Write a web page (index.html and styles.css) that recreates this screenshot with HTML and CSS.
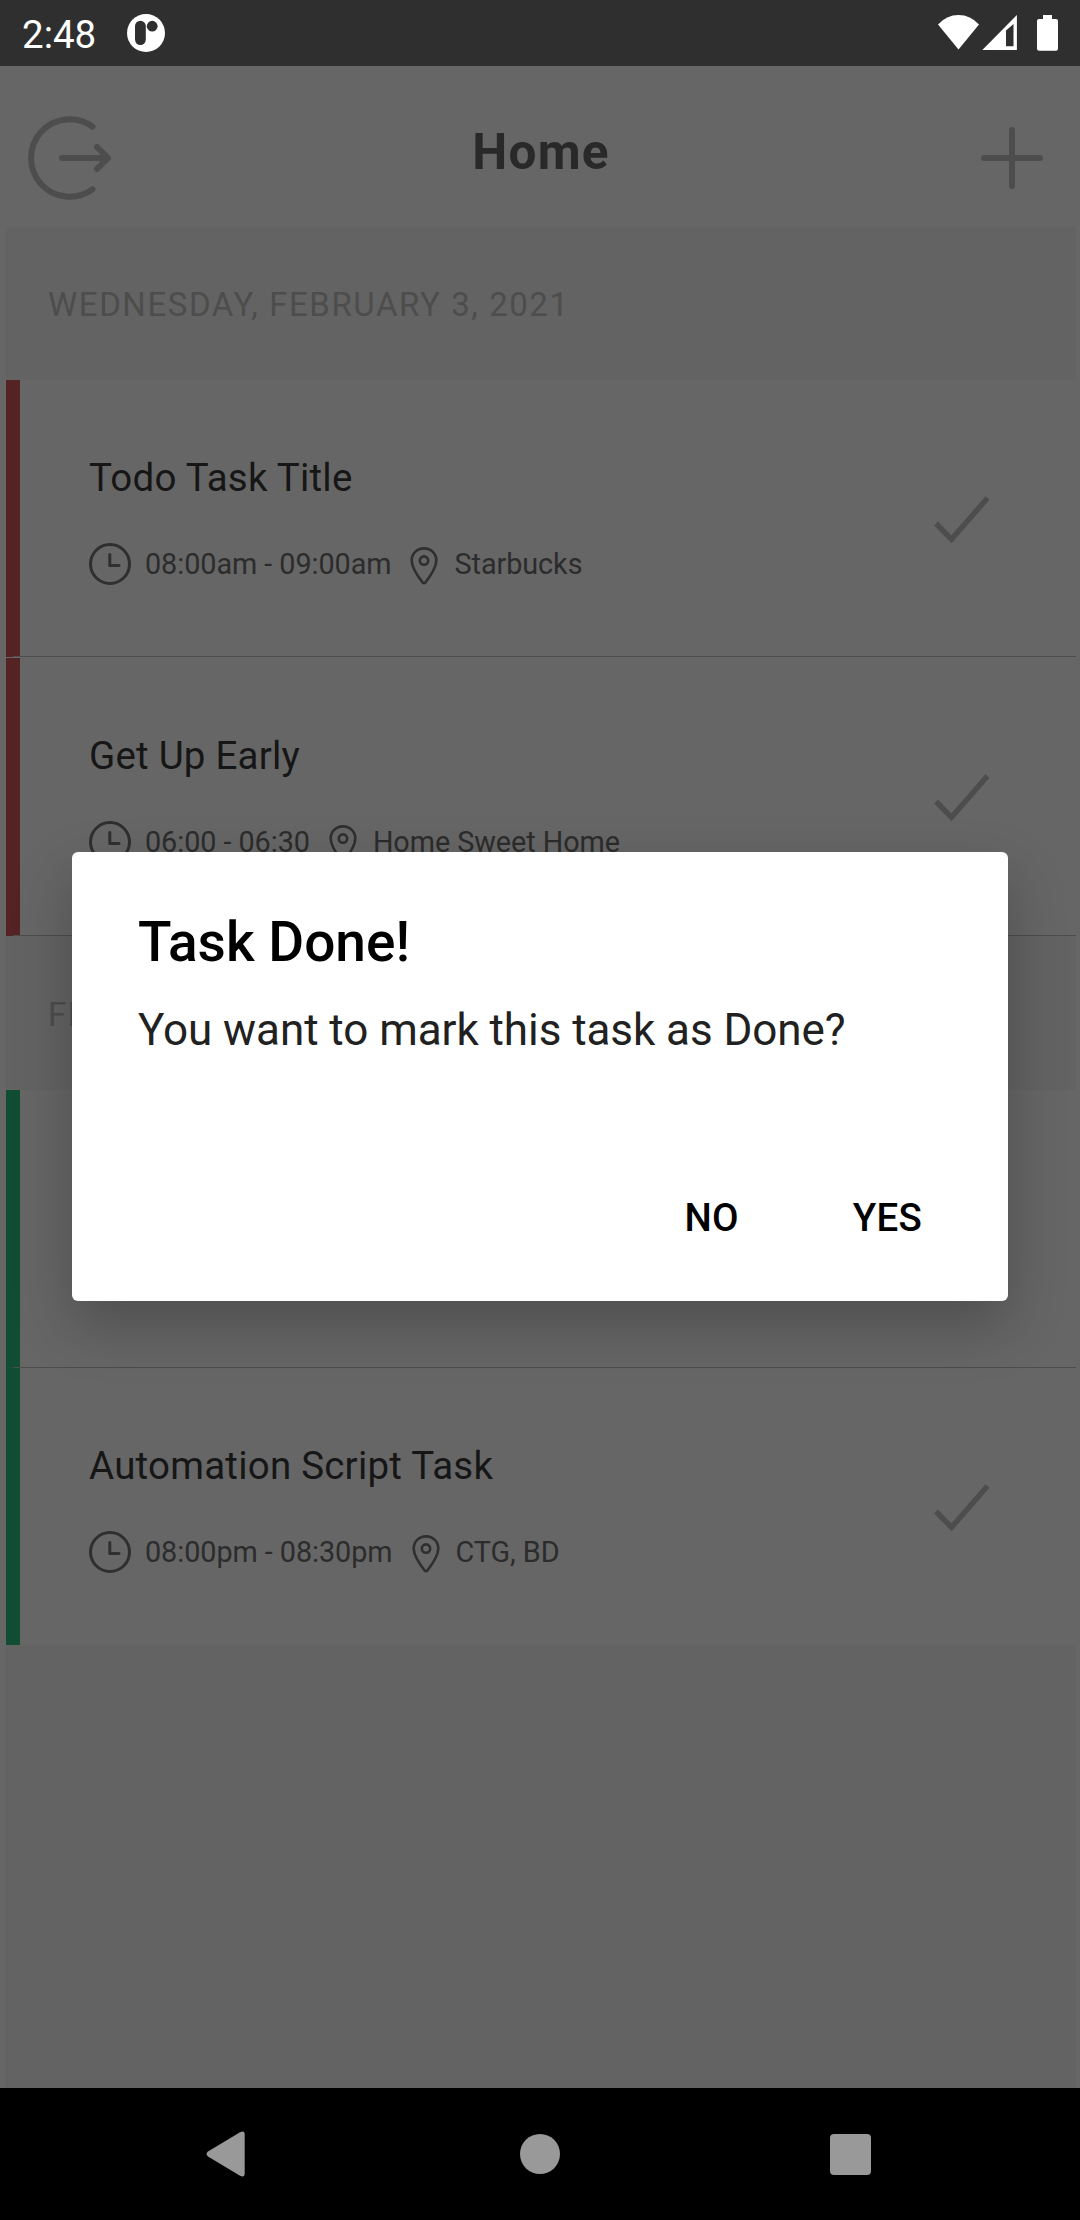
FILE: index.html
```html
<!DOCTYPE html>
<html lang="en">
<head>
<meta charset="utf-8">
<title>Home</title>
<link rel="stylesheet" href="styles.css">
</head>
<body>
<svg class="sprite" aria-hidden="true">
  <symbol id="clock" viewBox="0 0 42 42">
    <circle cx="21" cy="21" r="19.5"/>
    <path d="M20.8 11.5V22.4H30" stroke-linecap="round" stroke-linejoin="round"/>
  </symbol>
  <symbol id="pin" viewBox="0 0 28 38">
    <path d="M14 1.4C7 1.4 1.7 6.6 1.7 13.4C1.7 20 6.500 27.500 12.600 35.500Q14 37 15.400 35.500C21.500 27.500 26.300 20 26.300 13.400C26.300 6.600 21 1.400 14 1.400Z" stroke-linejoin="round"/>
    <circle cx="14" cy="13.600" r="4.200"/>
  </symbol>
  <symbol id="check" viewBox="0 0 56 48">
    <path d="M2 27.500L17.500 43.300L53.500 2"/>
  </symbol>
</svg>

<div class="screen">
  <div class="status">
    <span class="status-time">2:48</span>
    <svg class="status-app" width="38" height="38" viewBox="0 0 38 38">
      <circle cx="19" cy="19" r="19" fill="#fff"/>
      <rect x="8" y="6.700" width="10.800" height="24.300" rx="5.400" fill="#2f2f2f"/>
      <circle cx="25.200" cy="12.200" r="5.400" fill="#2f2f2f"/>
    </svg>
    <svg class="status-system" width="121" height="36" viewBox="0 0 121 36" fill="#fff">
      <path d="M0 9.500Q8.500 0 20.500 0T41 9.500L20.500 34.500Z"/>
      <path fill-rule="evenodd" d="M44.300 35L78.900 0V35ZM68 15.500V31.300H75.500V9Z"/>
      <path d="M105 0H114V4H118Q120 4 120 6V33.500Q120 35.700 118 35.700H101Q99 35.700 99 33.500V6Q99 4 101 4H105Z"/>
    </svg>
  </div>

  <header class="header">
    <svg class="line-icon" width="84" height="84" viewBox="0 0 84 84">
      <path d="M64.500 10.700A38.700 38.700 0 1 0 64.500 73.300M34 42H79.500M69 31L80 42L69 53"/>
    </svg>
    <h1 class="title">Home</h1>
    <svg class="line-icon add" width="64" height="64" viewBox="0 0 64 64">
      <path d="M32 4V60M4 32H60"/>
    </svg>
  </header>

  <main class="list">
    <h2 class="day">WEDNESDAY, FEBRUARY 3, 2021</h2>
    <section class="task overdue split">
      <div class="task-body">
        <h3 class="task-title">Todo Task Title</h3>
        <div class="meta">
          <svg class="clock"><use href="#clock"/></svg><span class="time">08:00am - 09:00am</span>
          <svg class="pin"><use href="#pin"/></svg><span>Starbucks</span>
        </div>
      </div>
      <svg class="check"><use href="#check"/></svg>
    </section>
    <section class="task overdue">
      <div class="task-body">
        <h3 class="task-title">Get Up Early</h3>
        <div class="meta">
          <svg class="clock"><use href="#clock"/></svg><span class="time">06:00 - 06:30</span>
          <svg class="pin"><use href="#pin"/></svg><span>Home Sweet Home</span>
        </div>
      </div>
      <svg class="check"><use href="#check"/></svg>
    </section>
    <h2 class="day">FRIDAY</h2>
    <section class="task upcoming"></section>
    <section class="task upcoming last">
      <div class="task-body">
        <h3 class="task-title">Automation Script Task</h3>
        <div class="meta">
          <svg class="clock"><use href="#clock"/></svg><span class="time">08:00pm - 08:30pm</span>
          <svg class="pin"><use href="#pin"/></svg><span>CTG, BD</span>
        </div>
      </div>
      <svg class="check"><use href="#check"/></svg>
    </section>
  </main>

  <nav class="nav">
    <svg width="39" height="46" viewBox="0 0 39 46"><path d="M2 20.500L34 1.200Q38.700 -1 38.700 3.500V42.500Q38.700 47 34 44.800L2 25.500Q-1 23 2 20.500Z"/></svg>
    <svg class="nav-home" width="40" height="40" viewBox="0 0 40 40"><circle cx="20" cy="20" r="20"/></svg>
    <svg width="41" height="41" viewBox="0 0 41 41"><rect width="41" height="41" rx="4"/></svg>
  </nav>

  <div class="dialog" role="dialog">
    <h2 class="dialog-title">Task Done!</h2>
    <p class="dialog-text">You want to mark this task as Done?</p>
    <div class="actions">
      <button class="action">NO</button>
      <button class="action">YES</button>
    </div>
  </div>
</div>
</body>
</html>
```

FILE: styles.css
```css
* { box-sizing: border-box; margin: 0; padding: 0; }

body {
  background: #666;
  font-family: Roboto, "Liberation Sans", sans-serif;
}

svg { display: block; flex: none; }
.sprite { position: absolute; width: 0; height: 0; }

.screen {
  position: relative;
  display: flex;
  flex-direction: column;
  width: 1080px;
  height: 2220px;
  overflow: hidden;
}

/* Status bar */
.status {
  display: flex;
  align-items: center;
  height: 66px;
  padding: 0 21px 0 22px;
  background: #2f2f2f;
  color: #fff;
}
.status-time {
  width: 105px;
  padding-top: 3px;
  font-size: 38.5px;
}
.status-system { margin: 0 0 0 auto; }

/* App header */
.header {
  display: grid;
  grid-template-columns: 1fr auto 1fr;
  align-items: center;
  height: 160px;
  padding: 24px 36px 0 28px;
}
.line-icon {
  fill: none;
  stroke: #4d4d4d;
  stroke-width: 6;
  stroke-linecap: round;
  stroke-linejoin: round;
}
.add { justify-self: end; }
.title {
  margin: 0 -4px 12px 6px;
  color: #29292a;
  font-size: 49.5px;
  line-height: 60px;
  letter-spacing: 1.2px;
}

/* Agenda */
.list {
  flex: 1;
  margin: 0 4px 0 6px;
  background: #636363;
}
.day {
  height: 154px;
  padding: 3px 0 0 42px;
  color: #4d4d4d;
  font-size: 33px;
  font-weight: 400;
  line-height: 151px;
  letter-spacing: 1.56px;
}
.task {
  display: flex;
  justify-content: space-between;
  align-items: center;
  height: 278px;
  padding-right: 86px;
  background:
    linear-gradient(#4d4d4d, #4d4d4d) 7px 100% / 100% 1px no-repeat,
    linear-gradient(var(--bar), var(--bar)) 0 0 / 14px 100% no-repeat,
    #666;
}
.overdue { --bar: #552323; }
.upcoming { --bar: #114d33; }
.split { height: 277px; box-shadow: 0 1px #666; margin-bottom: 1px; }
.last {
  height: 277px;
  background:
    linear-gradient(var(--bar), var(--bar)) 0 0 / 14px 100% no-repeat,
    #666;
}
.task-body {
  align-self: flex-start;
  padding: 75px 0 0 83px;
}
.task-title {
  color: #161616;
  font-size: 38.5px;
  font-weight: 400;
  line-height: 45px;
  letter-spacing: 0.22px;
}
.meta {
  display: flex;
  align-items: center;
  height: 42px;
  margin-top: 43px;
  color: #2c2c2c;
  font-size: 28.8px;
  letter-spacing: -0.06px;
  white-space: nowrap;
}
.clock, .pin { fill: none; stroke: #2f2f2f; stroke-width: 3; }
.clock { width: 42px; height: 42px; margin-right: 14px; }
.time { margin-right: 19px; }
.pin { width: 28px; height: 38px; margin: 3px 16px 0 0; stroke-width: 2.6; }
.check {
  width: 56px;
  height: 48px;
  margin-top: 2px;
  fill: none;
  stroke: #4d4d4d;
  stroke-width: 5.4;
}

/* System navigation */
.nav {
  display: flex;
  justify-content: space-between;
  align-items: center;
  height: 132px;
  padding: 0 209px 0 206px;
  background: #000;
  fill: #999;
}
.nav-home { margin-left: 5px; }

/* Confirmation dialog */
.dialog {
  position: absolute;
  top: 852px;
  left: 72px;
  width: 936px;
  height: 449px;
  padding: 58px 86px 0 66px;
  border-radius: 6px;
  background: #fff;
  box-shadow: 0 24px 58px rgba(0, 0, 0, 0.24);
  color: #000;
}
.dialog-title {
  font-size: 55px;
  font-weight: 500;
  line-height: 64px;
}
.dialog-text {
  margin-top: 30px;
  color: #212121;
  font-size: 44px;
  line-height: 52px;
  letter-spacing: -0.06px;
  white-space: nowrap;
}
.actions {
  display: flex;
  justify-content: flex-end;
  gap: 114px;
  margin-top: 139px;
}
.action {
  border: 0;
  background: none;
  color: inherit;
  font: 500 38.5px/45px Roboto, "Liberation Sans", sans-serif;
  letter-spacing: 0.2px;
}
```
